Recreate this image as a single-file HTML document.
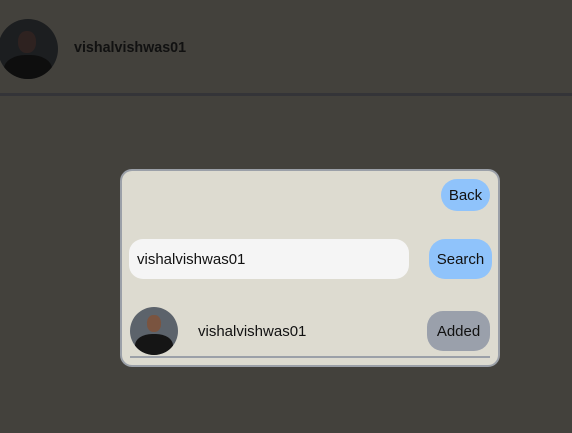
<!DOCTYPE html>
<html><head><style>
body{margin:0;width:572px;height:433px;background:#43413c;font-family:"Liberation Sans",sans-serif;position:relative;overflow:hidden}
.a{position:absolute}
</style></head><body>
<div class="a" style="left:-2px;top:19px;width:60px;height:60px;border-radius:50%;background:#1c1e20;overflow:hidden">
<div class="a" style="left:20px;top:12px;width:18px;height:22px;border-radius:45%;background:#2e2220"></div>
<div class="a" style="left:6px;top:36px;width:48px;height:30px;border-radius:45% 45% 0 0;background:#0e0e0e"></div>
</div>
<div class="a" style="left:74px;top:40px;font-size:14.3px;font-weight:bold;color:#111">vishalvishwas01</div>
<div class="a" style="left:0;top:93px;width:572px;height:3px;background:#343438"></div>

<div class="a" style="left:120px;top:169px;width:376px;height:194px;border:2px solid #9ba0a8;border-radius:12px;background:#dddbd0"></div>
<div class="a" style="left:441px;top:179px;width:49px;height:32px;border-radius:16px;background:#8fc3fb;font-size:15px;line-height:33px;text-align:center;color:#111">Back</div>
<div class="a" style="left:129px;top:239px;width:280px;height:40px;border-radius:14px;background:#f5f5f5;font-size:15px;line-height:41px;color:#111;box-sizing:border-box;padding-left:8px">vishalvishwas01</div>
<div class="a" style="left:429px;top:239px;width:63px;height:40px;border-radius:16px;background:#8fc3fb;font-size:15px;line-height:41px;text-align:center;color:#111">Search</div>
<div class="a" style="left:130px;top:307px;width:48px;height:48px;border-radius:50%;background:#5c636b;overflow:hidden">
<div class="a" style="left:17px;top:8px;width:14px;height:17px;border-radius:45%;background:#7a5440"></div>
<div class="a" style="left:5px;top:27px;width:38px;height:25px;border-radius:45% 45% 0 0;background:#151515"></div>
</div>
<div class="a" style="left:198px;top:323px;font-size:15px;color:#111">vishalvishwas01</div>
<div class="a" style="left:427px;top:311px;width:63px;height:40px;border-radius:16px;background:#9aa0ab;font-size:15px;line-height:41px;text-align:center;color:#111">Added</div>
<div class="a" style="left:130px;top:356px;width:360px;height:2px;background:#9ba0a8"></div>
</body></html>
